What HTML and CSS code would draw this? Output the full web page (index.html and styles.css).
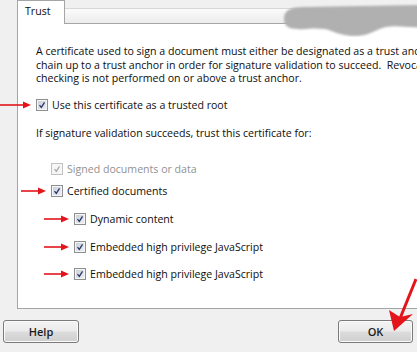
FILE: index.html
```html
<!DOCTYPE html>
<html lang="en">
<head>
    <meta charset="UTF-8">
    <meta name="viewport" content="width=device-width, initial-scale=1.0">
    <title>Trust</title>
    <link rel="stylesheet" href="styles.css">
</head>
<body>
    <div class="dialog">
        <div class="tabbar">
            <div class="tab">Trust</div>
            <div class="tab-strip"></div>
        </div>

        <div class="panel">
            <p class="intro">
                A certificate used to sign a document must either be designated as a trust anchor or<br>
                chain up to a trust anchor in order for signature validation to succeed.&nbsp; Revocation<br>
                checking is not performed on or above a trust anchor.
            </p>

            <div class="check row-root">
                <svg class="arrow arrow-long" viewBox="0 0 31 8"><line x1="0" y1="4" x2="24" y2="4"/><polygon points="23,0.5 31,4 23,7.5"/></svg>
                <span class="cb"><svg viewBox="0 0 12 12"><path d="M3 6.2 L5.2 8.8 L9 2.8"/></svg></span>
                <span>Use this certificate as a trusted root</span>
            </div>

            <p class="label">If signature validation succeeds, trust this certificate for:</p>

            <div class="check level1 row-signed disabled">
                <span class="cb"><svg viewBox="0 0 12 12"><path d="M3 6.2 L5.2 8.8 L9 2.8"/></svg></span>
                <span>Signed documents or data</span>
            </div>
            <div class="check level1 row-certified">
                <svg class="arrow" viewBox="0 0 25 8"><line x1="0" y1="4" x2="18" y2="4"/><polygon points="17,0.5 25,4 17,7.5"/></svg>
                <span class="cb"><svg viewBox="0 0 12 12"><path d="M3 6.2 L5.2 8.8 L9 2.8"/></svg></span>
                <span>Certified documents</span>
            </div>
            <div class="check level2 row-dynamic">
                <svg class="arrow" viewBox="0 0 25 8"><line x1="0" y1="4" x2="18" y2="4"/><polygon points="17,0.5 25,4 17,7.5"/></svg>
                <span class="cb"><svg viewBox="0 0 12 12"><path d="M3 6.2 L5.2 8.8 L9 2.8"/></svg></span>
                <span>Dynamic content</span>
            </div>
            <div class="check level2 row-js">
                <svg class="arrow" viewBox="0 0 25 8"><line x1="0" y1="4" x2="18" y2="4"/><polygon points="17,0.5 25,4 17,7.5"/></svg>
                <span class="cb"><svg viewBox="0 0 12 12"><path d="M3 6.2 L5.2 8.8 L9 2.8"/></svg></span>
                <span>Embedded high privilege JavaScript</span>
            </div>
            <div class="check level2 row-js2">
                <svg class="arrow" viewBox="0 0 25 8"><line x1="0" y1="4" x2="18" y2="4"/><polygon points="17,0.5 25,4 17,7.5"/></svg>
                <span class="cb"><svg viewBox="0 0 12 12"><path d="M3 6.2 L5.2 8.8 L9 2.8"/></svg></span>
                <span>Embedded high privilege JavaScript</span>
            </div>
        </div>

        <div class="buttons">
            <button class="btn">Help</button>
            <button class="btn btn-ok">OK</button>
        </div>
    </div>

    <!-- blurred-out smear over the title area -->
    <svg class="smear" viewBox="0 0 140 36">
        <defs><filter id="soft"><feGaussianBlur stdDeviation="1.2"/></filter></defs>
        <path filter="url(#soft)" d="M4 17 C4 9 12 6 24 6 L140 4 L140 26 C128 27 118 24 106 26 C96 28 90 35 74 35 C60 35 52 29 44 28 C30 26 20 30 10 27 C5 25 4 21 4 17 Z"/>
    </svg>

    <!-- red arrow pointing at OK -->
    <svg class="ok-arrow" viewBox="0 0 40 60">
        <line x1="36" y1="2" x2="19" y2="44"/>
        <polygon points="14,54 9,33 20,40 33,37"/>
    </svg>
</body>
</html>
```

FILE: styles.css
```css
body {
    margin: 0;
    width: 417px;
    height: 352px;
    overflow: hidden;
    position: relative;
    background-color: #f0f0f0;
    font-family: "Open Sans", "Liberation Sans", sans-serif;
    font-size: 10.6px;
    color: #0e0e0e;
}
.tabbar {
    display: flex;
    align-items: flex-end;
    height: 24px;
    margin-left: 17px;
}
.tab {
    width: 48px;
    height: 24px;
    box-sizing: border-box;
    border: 1px solid #a5a5a5;
    border-bottom: none;
    background-color: #fff;
    padding: 3px 0 0 7px;
    line-height: 14px;
}
.tab-strip {
    flex: 1;
    height: 16px;
    box-sizing: border-box;
    border-top: 1px solid #d6d6d6;
    border-bottom: 1px solid #a5a5a5;
    background: linear-gradient(#fbfbfb, #ececec);
}
.panel {
    margin-left: 17px;
    margin-right: -140px;
    height: 285px;
    box-sizing: border-box;
    border-left: 1px solid #a5a5a5;
    border-bottom: 1px solid #a5a5a5;
    background-color: #fff;
    padding: 21px 0 0 18px;
}
.intro {
    margin: 0;
    line-height: 13.5px;
    white-space: nowrap;
}
.label {
    margin: 14px 0 0;
    line-height: 14px;
}
.check {
    position: relative;
    display: flex;
    align-items: center;
    gap: 4px;
    height: 14px;
    line-height: 14px;
}
.row-root { margin-top: 12px; }
.row-signed { margin-top: 22px; }
.row-certified { margin-top: 8px; }
.row-dynamic { margin-top: 14px; }
.row-js { margin-top: 14px; }
.row-js2 { margin-top: 13px; }
.level1 { margin-left: 15px; }
.level2 { margin-left: 38px; }
.cb {
    flex: none;
    width: 12px;
    height: 12px;
    box-sizing: border-box;
    border: 1px solid #8e8f8f;
    background: linear-gradient(135deg, #c9ced6, #eef0f3);
    box-shadow: inset 0 0 0 1px #f4f5f7;
}
.cb svg {
    display: block;
    width: 10px;
    height: 10px;
}
.cb path {
    fill: none;
    stroke: #23356a;
    stroke-width: 1.5;
}
.disabled {
    color: #929292;
}
.disabled .cb {
    border-color: #c2c2c2;
    background: #f6f6f6;
    box-shadow: none;
}
.disabled .cb path {
    stroke: #a8a8a8;
}
.arrow {
    position: absolute;
    right: 100%;
    top: 3px;
    margin-right: 5px;
    width: 25px;
    height: 8px;
}
.arrow-long {
    width: 31px;
}
.arrow line {
    stroke: #e3151b;
    stroke-width: 1.6;
}
.arrow polygon {
    fill: #e3151b;
}
.buttons {
    display: flex;
    justify-content: space-between;
    padding: 11px 4px 0 3px;
}
.btn {
    width: 76px;
    height: 23px;
    border: 1px solid #7a7a7a;
    border-radius: 3px;
    background: linear-gradient(#f3f3f3 0%, #ebebeb 48%, #dcdcdc 52%, #cfcfcf 100%);
    box-shadow: inset 0 0 0 1px #fbfbfb;
    font-family: "Open Sans", "Liberation Sans", sans-serif;
    font-size: 11px;
    font-weight: 600;
    color: #1b1b1b;
    padding: 0;
}
.btn-ok {
    width: 75px;
}
.smear {
    position: absolute;
    left: 280px;
    top: 1px;
    width: 140px;
    height: 36px;
    fill: #b0b0b0;
}
.ok-arrow {
    position: absolute;
    left: 380px;
    top: 277px;
    width: 40px;
    height: 60px;
}
.ok-arrow line {
    stroke: #e3151b;
    stroke-width: 3;
}
.ok-arrow polygon {
    fill: #e3151b;
}
```
